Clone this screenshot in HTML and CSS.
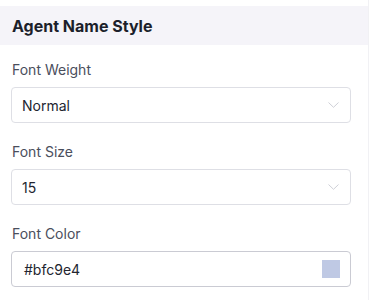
FILE: index.html
```html
<!DOCTYPE html>
<html lang="en">
<head>
    <meta charset="UTF-8">
    <meta name="viewport" content="width=device-width, initial-scale=1.0">
    <title>Agent Name Style</title>
    <link rel="stylesheet" href="styles.css">
</head>
<body>

<div class="panel">
    <div class="panel-header">Agent Name Style</div>

    <div class="panel-body">
        <div class="field">
            <label class="field-label">Font Weight</label>
            <div class="select">
                <span>Normal</span>
                <svg class="chevron" width="11" height="6" viewBox="0 0 11 6"><path d="M0.5 0.5 L5.5 5.3 L10.5 0.5" fill="none" stroke="#cfd0d7" stroke-width="1"/></svg>
            </div>
        </div>

        <div class="field">
            <label class="field-label">Font Size</label>
            <div class="select">
                <span>15</span>
                <svg class="chevron" width="11" height="6" viewBox="0 0 11 6"><path d="M0.5 0.5 L5.5 5.3 L10.5 0.5" fill="none" stroke="#cfd0d7" stroke-width="1"/></svg>
            </div>
        </div>

        <div class="field">
            <label class="field-label">Font Color</label>
            <div class="color-input">
                <span>#bfc9e4</span>
                <span class="swatch" style="background: #bfc9e4;"></span>
            </div>
        </div>
    </div>
</div>

</body>
</html>
```

FILE: styles.css
```css
* {
    box-sizing: border-box;
}

body {
    margin: 0;
    font-family: 'Inter', 'Noto Sans', sans-serif;
    background: #fff;
    color: #1f2230;
}

.panel {
    width: 369px;
    height: 300px;
    padding-top: 6px;
    border-right: 1px solid #f1f1f4;
}

.panel-header {
    background: #f5f4f9;
    height: 39px;
    padding: 0 12px;
    display: flex;
    align-items: center;
    font-size: 16px;
    font-weight: 700;
    color: #1c1f2b;
}

.panel-body {
    padding: 15px 17px 0 11px;
    display: flex;
    flex-direction: column;
    gap: 19px;
}

.field {
    display: flex;
    flex-direction: column;
    gap: 7px;
}

.field-label {
    padding-left: 1px;
    font-size: 14px;
    line-height: 20px;
    color: #4a4e5c;
}

.select, .color-input {
    height: 36px;
    border: 1px solid #dedfe5;
    border-radius: 4px;
    display: flex;
    align-items: center;
    justify-content: space-between;
    padding: 0 11px 0 10px;
    font-size: 14px;
    color: #222530;
}

.color-input {
    border-color: #cacbd3;
    padding: 0 10px 0 12px;
}

.swatch {
    width: 18px;
    height: 18px;
}
```
